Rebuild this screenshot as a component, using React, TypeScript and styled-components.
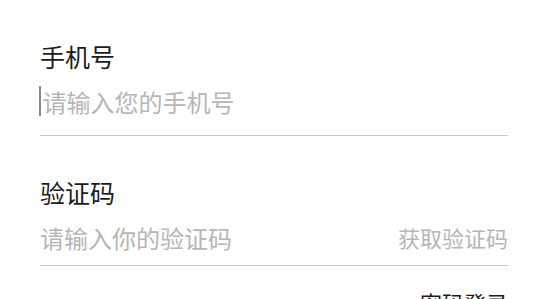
import React from "react";
import styled, { createGlobalStyle } from "styled-components";

const GlobalStyle = createGlobalStyle`
  html, body {
    margin: 0;
    padding: 0;
    background: #fff;
  }
  body {
    font-family: "Noto Sans CJK SC", "Noto Sans", sans-serif;
  }
`;

const Page = styled.div`
  width: 548px;
  height: 299px;
  overflow: hidden;
  box-sizing: border-box;
  padding: 40px 40px 0;
  background: #fff;
`;

const Field = styled.div<{ $gap?: number; $pad?: number }>`
  display: flex;
  flex-direction: column;
  margin-top: ${(p) => p.$gap ?? 0}px;
  padding-bottom: ${(p) => p.$pad ?? 10}px;
  border-bottom: 1.5px solid #c9c9c9;
`;

const Label = styled.label`
  font-size: 25px;
  line-height: 32px;
  color: #1c1c1c;
`;

const Row = styled.div`
  display: flex;
  align-items: center;
  margin-top: 9px;
  height: 40px;
`;

const Caret = styled.span`
  flex: none;
  width: 1.5px;
  height: 30px;
  margin-left: -1px;
  margin-right: 2px;
  background: #8a8a8a;
`;

const Input = styled.input`
  flex: 1;
  min-width: 0;
  border: none;
  outline: none;
  padding: 0;
  margin: 0;
  height: 40px;
  font-family: inherit;
  font-size: 24px;
  color: #333;
  caret-color: transparent;
  background: transparent;

  &::placeholder {
    color: #b6b6b6;
  }
`;

const CodeButton = styled.button`
  border: none;
  background: none;
  padding: 0;
  font-family: inherit;
  font-size: 22px;
  color: #b6b6b6;
  cursor: pointer;
`;

const Footer = styled.div`
  display: flex;
  justify-content: flex-end;
  margin-top: 21px;
`;

const LinkText = styled.a`
  font-size: 22px;
  line-height: 30px;
  color: #1c1c1c;
  text-decoration: none;
`;

export default function App() {
  return (
    <>
      <GlobalStyle />
      <Page>
        <Field $pad={14}>
          <Label>手机号</Label>
          <Row>
            <Caret />
            <Input type="tel" placeholder="请输入您的手机号" />
          </Row>
        </Field>
        <Field $gap={40} $pad={8}>
          <Label>验证码</Label>
          <Row>
            <Input type="text" placeholder="请输入你的验证码" />
            <CodeButton type="button">获取验证码</CodeButton>
          </Row>
        </Field>
        <Footer>
          <LinkText href="#">密码登录</LinkText>
        </Footer>
      </Page>
    </>
  );
}
